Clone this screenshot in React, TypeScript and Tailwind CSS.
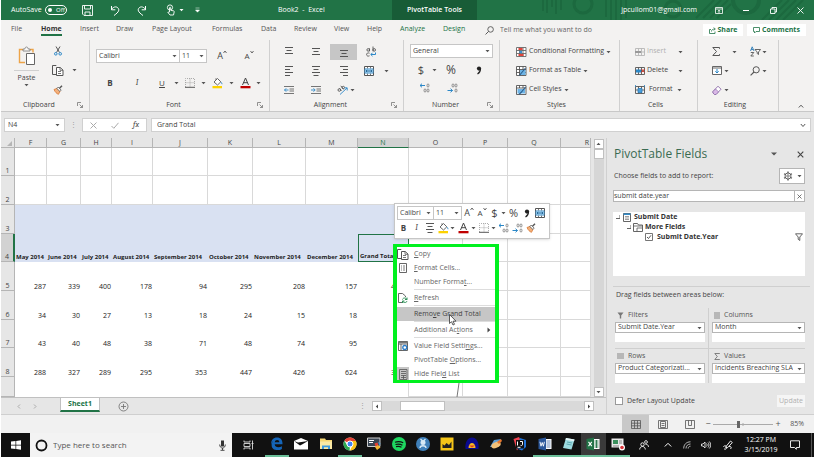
import React from "react";
import type { ReactNode } from "react";

type IconProps = { w?: number; h?: number; children: ReactNode; className?: string };

function Svg({ w = 12, h = 12, children, className = "" }: IconProps) {
  return (
    <svg width={w} height={h} viewBox={`0 0 ${w} ${h}`} fill="none" className={`shrink-0 ${className}`} aria-hidden="true">
      {children}
    </svg>
  );
}

const Caret = ({ className = "text-[#555]" }: { className?: string }) => (
  <Svg w={5} h={4} className={className}>
    <path d="M.5 1h4L2.5 3.2z" fill="currentColor" />
  </Svg>
);

const Launcher = () => (
  <Svg w={6} h={6}>
    <path d="M.5 4V.5H4M2.5 2.5l3 3M5.5 3v2.5H3" stroke="#777" strokeWidth=".8" />
  </Svg>
);

const Scissors = () => (
  <Svg w={10} h={10}>
    <path d="M3 .5l3.5 6M7 .5L3.5 6.5" stroke="#555" strokeWidth="1" />
    <circle cx="2.8" cy="7.8" r="1.3" stroke="#2b88c8" />
    <circle cx="7.2" cy="7.8" r="1.3" stroke="#2b88c8" />
  </Svg>
);

const CopyIcon = () => (
  <Svg w={12} h={11}>
    <path d="M4.5 9.5h-4v-9h3.8" stroke="#555" />
    <path d="M4.5 2.5h3.7l2.8 2.6v5.4H4.5z" fill="#fff" stroke="#555" />
    <path d="M8 2.5v2.8h3M6 6.5h3M6 8.5h3" stroke="#555" strokeWidth=".8" />
  </Svg>
);

const Brush = () => (
  <Svg w={10} h={10}>
    <path d="M1 4.5l3.5-1.3 2.6 2.9L5.5 9.3C3.8 8.8 2 7 1 4.5z" fill="#f3b07c" stroke="#d97a35" strokeWidth=".8" />
    <path d="M3.8 3.5l1.4-1.4 3 3-1.3 1.3z" fill="#fff" stroke="#555" strokeWidth=".8" />
    <path d="M6.5 3.3L9 .8" stroke="#555" strokeWidth="1.5" />
  </Svg>
);

const PasteIcon = () => (
  <Svg w={18} h={20}>
    <path d="M5 3.5H1.5v13H7M12 3.5h3v3" stroke="#eda447" strokeWidth="1.4" />
    <path d="M5 5V3h1.8C7 1.7 7.6 1 8.5 1s1.5.7 1.7 2H12v2z" fill="#f8f8f8" stroke="#777" strokeWidth=".8" />
    <path d="M8.5 7.5h8v11h-8z" fill="#fff" stroke="#666" />
  </Svg>
);

const GrowA = ({ up }: { up: boolean }) => (
  <span className="flex items-start text-[#444]">
    <span className={up ? "text-[9px] leading-3" : "text-[8px] leading-3"}>A</span>
    <Svg w={4} h={4}>
      <path d={up ? "M.5 3L2 1l1.500 2" : "M.5 1L2 3l1.500-2"} stroke="#444" strokeWidth=".8" />
    </Svg>
  </span>
);

const BorderIcon = () => (
  <Svg w={10} h={10}>
    <path d="M.5 9V.5h9V9M5 .5V9M.5 4.700h9" stroke="#999" strokeWidth=".8" strokeDasharray="1 1" />
    <path d="M0 9.300h10" stroke="#555" />
  </Svg>
);

const FillIcon = () => (
  <Svg w={11} h={12}>
    <path d="M2 5l3.500-3.500 3.300 3.300L5.500 8z" fill="#fff" stroke="#555" strokeWidth=".9" />
    <path d="M4 3V1.200" stroke="#555" strokeWidth=".8" />
    <path d="M9 5.200c.8 1 1 1.600 1 2" stroke="#2b88c8" />
    <path d="M.5 9h9.500v2.300H.5z" fill="#fdd200" />
  </Svg>
);

const FontColor = () => (
  <Svg w={11} h={12}>
    <path d="M2.500 8l3-7 3 7M3.500 5.700h4" stroke="#444" />
    <path d="M.5 9h10v2.300H.5z" fill="#c00000" />
  </Svg>
);

function Lines({ d }: { d: string }) {
  return (
    <Svg w={10} h={10}>
      <path d={d} stroke="#555" strokeWidth="1" />
    </Svg>
  );
}
const alignD = {
  top: "M1 .5h8M2.500 3.500h5M1 6.500h8",
  middle: "M1 1.500h8M2.500 4.500h5M1 7.500h8",
  bottom: "M1 3.500h8M2.500 6.500h5M1 9.500h8",
  center: "M1 .5h8M2.500 3.500h5M1 6.500h8M2.500 9.500h5",
  left: "M1 .5h8M1 3.500h5M1 6.500h8M1 9.500h5",
  right: "M1 .5h8M4 3.500h5M1 6.500h8M4 9.500h5",
};

const Indent = ({ right }: { right?: boolean }) => (
  <Svg w={10} h={10}>
    <path d="M0 1.500h10M5.500 4h4.500M5.500 6h4.500M0 8.500h10" stroke="#666" strokeWidth=".9" />
    <path d={right ? "M0 5h4M2.500 3.300L4.200 5 2.500 6.700" : "M.5 5h4M2.200 3.300L.5 5l1.700 1.700"} stroke="#2b88c8" strokeWidth=".9" />
  </Svg>
);

const MergeIcon = () => (
  <Svg w={10} h={10}>
    <path d="M.5.5h9v9h-9z" fill="#fff" stroke="#555" />
    <path d="M3.500.5v2M6.500.5v2M3.500 7.500v2M6.500 7.500v2" stroke="#555" strokeWidth=".8" />
    <path d="M.8 2.800h8.400v4.400H.8z" fill="#9fd0f0" stroke="#2b7cb8" strokeWidth=".6" />
    <path d="M2 5h6M3.200 3.900L2 5l1.200 1.100M6.800 3.900L8 5 6.800 6.100" stroke="#1b5e91" strokeWidth=".8" />
  </Svg>
);

const WrapIcon = () => (
  <Svg w={10} h={11}>
    <path d="M3.500 2.300v3M7 .5v4.800" stroke="#555" strokeWidth=".9" />
    <circle cx="2.200" cy="3.900" r="1.300" stroke="#555" strokeWidth=".9" />
    <circle cx="8.200" cy="3.900" r="1.300" stroke="#555" strokeWidth=".9" />
    <path d="M3.500 7.200C1.500 6.300.6 7.500.6 8.600s1.200 2 2.900 1.200" stroke="#555" strokeWidth=".9" />
    <path d="M9.500 6.500v2H5M6.500 6.800L4.800 8.500l1.700 1.700" stroke="#2b88c8" />
  </Svg>
);

const OrientIcon = () => (
  <Svg w={11} h={10}>
    <circle cx="2.300" cy="5" r="1.300" stroke="#555" strokeWidth=".9" />
    <path d="M2.500 3.200l2 2.500M3.800.8l2.700 3.500" stroke="#555" strokeWidth=".9" />
    <circle cx="6.300" cy="2.500" r="1.200" stroke="#555" strokeWidth=".9" />
    <path d="M3 9.500l7-6.500M7.500 2.800h2.700v2.700" stroke="#2b88c8" strokeWidth=".9" />
  </Svg>
);

const Decimals = ({ more }: { more?: boolean }) => (
  <Svg w={11} h={10}>
    {!more && <ellipse cx="6" cy="2.500" rx="1" ry="1.600" stroke="#777" strokeWidth=".8" />}
    <ellipse cx="9" cy="2.500" rx="1" ry="1.600" stroke="#777" strokeWidth=".8" />
    {more && <ellipse cx="6" cy="7.500" rx="1" ry="1.600" stroke="#777" strokeWidth=".8" />}
    <ellipse cx="9" cy="7.500" rx="1" ry="1.600" stroke="#777" strokeWidth=".8" />
    <path d={more ? "M1 2.500h5M3 .7L1 2.500l2 1.800" : "M.5 7.500h5M3.500 5.700l2 1.800-2 1.800"} stroke="#2b88c8" strokeWidth="1" />
  </Svg>
);

const Comma = () => (
  <Svg w={6} h={9}>
    <circle cx="3" cy="2.600" r="2.100" fill="#222" />
    <path d="M4.500 2.500C4.600 5 3.500 6.800 1.500 8" stroke="#222" strokeWidth="1.200" />
  </Svg>
);

const CondIcon = () => (
  <Svg w={11} h={10}>
    <path d="M.5.5h9.500v9H.5zM.5 3.500h9.500M.5 6.500h9.500M3.500.5v9M7 .5v9" fill="#fff" stroke="#666" strokeWidth=".9" />
    <path d="M2.500 1h4v2h-4zM2.500 7h5v2h-5z" fill="#e2453c" />
    <path d="M3.500 4h2.500v2H3.500z" fill="#3b8fd0" />
  </Svg>
);
const TableIcon = () => (
  <Svg w={11} h={10}>
    <path d="M.5.5h9.500v9H.5zM.5 3.500h9.500M.5 6.500h9.500M3.500.5v9M7 .5v9" fill="#fff" stroke="#555" strokeWidth=".9" />
    <path d="M4 4h5.500v5H4z" fill="#6db4e6" />
    <path d="M9.500 2L5 7.500l-1.500 1.800" stroke="#2b5f8f" strokeWidth="1.100" />
  </Svg>
);
const StyleIcon = () => (
  <Svg w={11} h={10}>
    <path d="M.5.5h9.500v9H.5zM.5 3h9.500M3.500.5v2.500M7 .5v2.500" fill="#fff" stroke="#555" strokeWidth=".9" />
    <path d="M1.500 4h7.500v4.500H1.500z" fill="#6db4e6" />
    <path d="M9.500 2L5 7.500l-2 1.800" stroke="#2b5f8f" strokeWidth="1.100" />
  </Svg>
);
const CellsIcon = ({ kind }: { kind: "insert" | "delete" | "format" }) => {
  const c = kind === "insert" ? "#b5b5b5" : "#555";
  return (
    <Svg w={10} h={10}>
      <path d="M.5 1.500h9M.5 8.500h9M.5 1.500v7M9.500 1.500v7M3.500 1.500v7M6.500 1.500v7M.5 5h9" stroke={c} strokeWidth=".9" />
      {kind === "insert" && <path d="M0 5h6" stroke="#999" strokeWidth="2" />}
      {kind === "delete" && (
        <>
          <path d="M1 3.500h5v3H1z" fill="#2b88c8" />
          <path d="M6.500 3l3 3.500M9.500 3l-3 3.500" stroke="#d83b2c" />
        </>
      )}
      {kind === "format" && <path d="M3 3.500h4v4H3zM.5 0v2M9.500 0v2" fill="#49a0de" stroke="#2b7cb8" strokeWidth=".8" />}
    </Svg>
  );
};

const Sigma = () => (
  <Svg w={8} h={9}>
    <path d="M7.500 1.800V.5H.8L4.500 4.500.8 8.500h6.700V7.200" stroke="#555" />
  </Svg>
);
const SortIcon = () => (
  <Svg w={11} h={11}>
    <path d="M.5 5L2.200.8 4 5M1.200 3.500h2" stroke="#2b7cb8" strokeWidth=".9" />
    <path d="M.8 6.500h3L.8 10h3" stroke="#555" strokeWidth=".9" />
    <path d="M5 3.500h5.500L8.500 6v2.500l-1.300-1V6z" fill="#fff" stroke="#555" strokeWidth=".9" />
  </Svg>
);
const FillDown = () => (
  <Svg w={10} h={9}>
    <path d="M.5.5h9v8h-9zM.5 2h9" fill="#fff" stroke="#555" strokeWidth=".9" />
    <path d="M5 3v4M3.300 5.300L5 7l1.700-1.700" stroke="#2b88c8" />
  </Svg>
);
const FindIcon = ({ size = 10 }: { size?: number }) => (
  <svg width={size} height={size} viewBox="0 0 10 10" fill="none" className="shrink-0" aria-hidden="true">
    <circle cx="6.200" cy="3.800" r="3.100" stroke="#555" />
    <path d="M4 6L.6 9.400" stroke="#555" strokeWidth="1.100" />
  </svg>
);
const EraserIcon = () => (
  <Svg w={10} h={10}>
    <path d="M1 6.500l5-5.300 3 3-5 5.300H2.500L1 8z" fill="#fff" stroke="#8b6aa8" strokeWidth=".9" />
    <path d="M1 6.500l2.500-2.600 3 3L4 9.500H2.500L1 8z" fill="#d9b8e6" stroke="#8b6aa8" strokeWidth=".7" />
  </Svg>
);

const Btn = ({ label, className = "", children }: { label: string; className?: string; children?: ReactNode }) => (
  <button type="button" aria-label={label} className={`flex items-center justify-center ${className}`}>
    {children}
  </button>
);

function Pick({ label, value, className }: { label: string; value: string; className: string }) {
  return (
    <span className={`flex items-center border border-[#c6c6c6] bg-white pr-0.5 ${className}`}>
      <select aria-label={label} className="h-full min-w-0 flex-1 appearance-none bg-transparent pl-0.5 text-[7px] leading-3 text-[#444] outline-none">
        <option>{value}</option>
      </select>
      <Caret />
    </span>
  );
}

function Group({ name, launcher, className, children }: { name: string; launcher?: boolean; className: string; children: ReactNode }) {
  return (
    <section aria-label={name} className={`flex flex-col ${className}`}>
      <div className="flex h-[59px] items-stretch border-r border-[#d0d0d0]">{children}</div>
      <div className="flex h-3 items-center border-r border-[#d0d0d0] pr-1.5">
        <span className="flex-1 text-center">{name}</span>
        {launcher && <Btn label={`${name} settings`}><Launcher /></Btn>}
      </div>
    </section>
  );
}

function TitleBar() {
  return (
    <header className="flex h-5 items-stretch bg-[#217346] text-[7px] text-white">
      <div className="flex w-[391px] items-center">
        <span className="w-[44px] pl-2.5">AutoSave</span>
        <button type="button" role="switch" aria-checked="false" aria-label="AutoSave" className="flex h-2.5 w-[22px] items-center gap-1 rounded-full border border-white pl-0.5 text-[6px]">
          <span className="h-1 w-1 rounded-full bg-white" />Off
        </button>
        <Btn label="Save" className="w-[40px]">
          <Svg w={11} h={11}>
            <path d="M.5.5h10v10H2L.5 9zM2.500.5v3.500h6V.5M3 10.500V7h5v3.500" stroke="#fff" strokeWidth=".9" />
          </Svg>
        </Btn>
        <Btn label="Undo" className="w-[16px]">
          <Svg w={10} h={11}>
            <path d="M1.500 1v3.800h3.800M1.500 4.500C3 2 6 1 7.800 2.800s1.500 4-3.800 7.700" stroke="#fff" strokeWidth="1" />
          </Svg>
        </Btn>
        <Btn label="Redo" className="w-[38px]">
          <Svg w={10} h={11}>
            <path d="M8.500 1v3.800H4.700M8.500 4.500C7 2 4 1 2.200 2.800s-1.500 4 3.800 7.700" stroke="#fff" strokeWidth="1" />
          </Svg>
        </Btn>
        <Btn label="Touch mode" className="w-[28px] gap-1">
          <Svg w={9} h={12}>
            <circle cx="4" cy="3.500" r="2.600" stroke="#fff" strokeWidth=".9" />
            <path d="M3.500 8V3.800c0-.8 1.200-.8 1.200 0v2.500l3 .6c.5.2.6.500.5 1L7.500 11H4L1.800 8.300z" fill="#217346" stroke="#fff" strokeWidth=".9" />
          </Svg>
          <Caret className="text-white" />
        </Btn>
        <Btn label="Customize toolbar" className="w-[16px]">
          <Svg w={5} h={6}><path d="M.5 1h4M.5 3h4L2.500 5.200z" fill="#fff" stroke="#fff" strokeWidth=".5" /></Svg>
        </Btn>
        <span className="flex-1 pl-[73px] whitespace-pre">Book2  -  Excel</span>
      </div>
      <div className="flex w-[85px] items-center justify-center bg-[#185c37] font-semibold">PivotTable Tools</div>
      <div className="relative flex flex-1 items-center justify-end overflow-hidden">
        <svg className="absolute right-0 top-0" width="276" height="20" viewBox="0 0 276 20" fill="none" aria-hidden="true">
          <g stroke="#1c693f" strokeWidth="2">
            <path d="M5 0v11M9 0v13M14 0v7M18 0v14M23 0v10" />
            <circle cx="45" cy="4" r="9" strokeWidth="3" />
            <path d="M68 0v17M73 0v20M78 0v20M83 0v20M88 0v18" />
            <circle cx="135" cy="9" r="8" strokeWidth="3" />
            <path d="M158 18l18-18M165 18l18-18M172 18l18-18M179 18l14-14" />
            <circle cx="208" cy="0" r="13" strokeWidth="4" />
            <path d="M224 20l20-20M231 20l20-20M238 20l20-20M245 20l20-20" />
          </g>
        </svg>
        <span className="relative pr-2">jpcullom01@gmail.com</span>
        <div className="relative flex">
          <Btn label="Ribbon display options" className="w-[27px]">
            <Svg w={8} h={7}><path d="M.5.5h7v6h-7zM.5 2h7M4 6V3.300M2.800 4.300L4 3.200l1.200 1.100" stroke="#fff" strokeWidth=".8" /></Svg>
          </Btn>
          <Btn label="Minimize" className="w-[28px]"><Svg w={7} h={7}><path d="M0 3.500h6" stroke="#fff" /></Svg></Btn>
          <Btn label="Restore" className="w-[27px]">
            <Svg w={7} h={7}><path d="M.5 2h4.500v4.500H.5zM2 2V.5h4.500V5H5" stroke="#fff" strokeWidth=".9" /></Svg>
          </Btn>
          <Btn label="Close" className="w-[27px]"><Svg w={7} h={7}><path d="M.5.5l6 6M6.500.5l-6 6" stroke="#fff" strokeWidth=".9" /></Svg></Btn>
        </div>
      </div>
    </header>
  );
}

const tabs: [string, string][] = [
  ["File", "w-[30px]"], ["Home", "w-[39px]"], ["Insert", "w-[36px]"], ["Draw", "w-[36px]"],
  ["Page Layout", "w-[60px]"], ["Formulas", "w-[49px]"], ["Data", "w-[33px]"], ["Review", "w-[40px]"],
  ["View", "w-[33px]"], ["Help", "w-[33px]"], ["Analyze", "w-[43px]"], ["Design", "w-[42px]"],
];

function TabRow() {
  return (
    <nav className="flex h-5 items-center bg-[#f3f2f1] pl-2.5 text-[7px] text-[#555]">
      {tabs.map(([name, w]) => (
        <button key={name} type="button" className={`flex text-left whitespace-nowrap ${w}`}>
          <span
            className={
              name === "Home"
                ? "border-b-2 border-[#217346] font-bold text-[#333]"
                : name === "Analyze" || name === "Design"
                  ? "border-b-2 border-transparent text-[#217346]"
                  : "border-b-2 border-transparent"
            }
          >
            {name}
          </span>
        </button>
      ))}
      <FindIcon size={9} />
      <input aria-label="Tell me what you want to do" placeholder="Tell me what you want to do" className="ml-1.5 w-[120px] bg-transparent outline-none placeholder:text-[#666]" />
      <div className="ml-auto flex gap-1 pr-2 font-bold text-[#217346]">
        <button type="button" className="flex h-3 w-[40px] items-center justify-center gap-0.5 bg-white">
          <Svg w={7} h={7}><path d="M2 2.500H.5v4h5.500V4.500M2.500 4.500C2.500 2.500 4 2 6 2M4.800.5L6.300 2 4.800 3.500" stroke="#217346" strokeWidth=".8" /></Svg>
          Share
        </button>
        <button type="button" className="flex h-3 w-[59px] items-center justify-center gap-0.5 bg-white">
          <Svg w={7} h={7}><path d="M.5.5h6v4H3L1.500 6V4.500h-1z" stroke="#217346" strokeWidth=".8" /></Svg>
          Comments
        </button>
      </div>
    </nav>
  );
}

const CurrencyBtn = ({ className = "" }: { className?: string }) => (
  <Btn label="Currency" className={className}>
    <span className="text-[11px] leading-3 text-[#444]">$</span>
  </Btn>
);

function Ribbon() {
  return (
    <div className="flex h-[72px] items-stretch border-b border-[#c8c8c8] bg-[#f3f2f1] text-[7px] text-[#444]">
      <Group name="Clipboard" launcher className="w-[89px]">
        <button type="button" className="ml-3 flex w-[27px] flex-col items-center pt-1.5">
          <PasteIcon />
          <span className="mt-1 border-t border-[#d0d0d0] px-1 pt-0.5 leading-[10px]">Paste</span>
          <Caret />
        </button>
        <div className="ml-3 flex flex-col justify-around pt-0.5">
          <Btn label="Cut" className="w-3"><Scissors /></Btn>
          <div className="flex items-center gap-2">
            <Btn label="Copy" className="w-3"><CopyIcon /></Btn>
            <Caret />
          </div>
          <Btn label="Format painter" className="w-3"><Brush /></Btn>
        </div>
      </Group>

      <Group name="Font" launcher className="w-[180px]">
        <div className="flex flex-1 flex-col gap-3.5 pt-[9px] pl-1.5">
          <div className="flex items-center">
            <Pick label="Font" value="Calibri" className="h-3.5 w-[84px]" />
            <Pick label="Font size" value="11" className="h-3.5 w-[27px] border-l-0" />
            <Btn label="Increase font size" className="ml-2.5 w-2.5"><GrowA up /></Btn>
            <Btn label="Decrease font size" className="ml-4 w-3"><GrowA up={false} /></Btn>
          </div>
          <div className="flex h-3 items-center">
            <Btn label="Bold" className="w-[28px] font-bold text-[8px]">B</Btn>
            <Btn label="Italic" className="w-[26px] font-serif text-[8px] italic">I</Btn>
            <Btn label="Underline" className="w-[24px] text-[8px] underline">U</Btn>
            <Caret />
            <Btn label="Borders" className="w-[22px]"><BorderIcon /></Btn>
            <Caret />
            <Btn label="Fill colour" className="w-[23px]"><FillIcon /></Btn>
            <Caret />
            <Btn label="Font colour" className="w-[22px]"><FontColor /></Btn>
            <Caret />
          </div>
        </div>
      </Group>

      <Group name="Alignment" launcher className="w-[134px]">
        <div className="grid flex-1 grid-cols-[26px_27px_29px_26px_1fr] grid-rows-3 items-center justify-items-center pt-0.5 pl-1.5">
          <Btn label="Top align"><Lines d={alignD.top} /></Btn>
          <Btn label="Middle align"><Lines d={alignD.middle} /></Btn>
          <Btn label="Bottom align" className="h-4 w-[27px] bg-[#c6c6c6]"><Lines d={alignD.bottom} /></Btn>
          <Btn label="Wrap text"><WrapIcon /></Btn>
          <span />
          <Btn label="Align left"><Lines d={alignD.left} /></Btn>
          <Btn label="Center"><Lines d={alignD.center} /></Btn>
          <Btn label="Align right"><Lines d={alignD.right} /></Btn>
          <Btn label="Merge and center" className="pr-1"><MergeIcon /></Btn>
          <Btn label="Merge options" className="justify-self-start"><Caret /></Btn>
          <Btn label="Decrease indent"><Indent /></Btn>
          <Btn label="Increase indent"><Indent right /></Btn>
          <Btn label="Orientation" className="gap-0.5 pl-1"><OrientIcon /><Caret /></Btn>
        </div>
      </Group>

      <Group name="Number" launcher className="w-[96px]">
        <div className="flex flex-1 flex-col gap-1.5 pt-1 pl-1.5">
          <Pick label="Number format" value="General" className="h-3.5 w-[83px]" />
          <div className="flex h-3 items-center">
            <CurrencyBtn className="w-[22px]" />
            <Caret />
            <Btn label="Percent" className="w-[28px] text-[12px] leading-3">%</Btn>
            <Btn label="Comma style" className="w-[28px]"><Comma /></Btn>
          </div>
          <div className="flex h-3 items-center">
            <Btn label="Increase decimal" className="w-[28px]"><Decimals more /></Btn>
            <Btn label="Decrease decimal" className="w-[28px]"><Decimals /></Btn>
          </div>
        </div>
      </Group>

      <Group name="Styles" className="w-[120px]">
        <div className="flex flex-1 flex-col justify-around pt-0.5 pl-4">
          <button type="button" className="flex items-center gap-0.5 whitespace-nowrap"><CondIcon />Conditional Formatting<Caret /></button>
          <button type="button" className="flex items-center gap-0.5 whitespace-nowrap"><TableIcon />Format as Table<Caret /></button>
          <button type="button" className="flex items-center gap-0.5 whitespace-nowrap"><StyleIcon />Cell Styles<Caret /></button>
        </div>
      </Group>

      <Group name="Cells" className="w-[78px]">
        <div className="flex flex-1 flex-col justify-around pt-0.5 pl-[15px]">
          <button type="button" className="flex items-center gap-0.5 text-[#b0b0b0]"><CellsIcon kind="insert" /><span className="w-[29px] text-left">Insert</span><Caret /></button>
          <button type="button" className="flex items-center gap-0.5"><CellsIcon kind="delete" /><span className="w-[29px] text-left">Delete</span><Caret /></button>
          <button type="button" className="flex items-center gap-1"><CellsIcon kind="format" />Format<Caret /></button>
        </div>
      </Group>

      <Group name="Editing" className="w-[81px]">
        <div className="grid flex-1 grid-cols-[38px_1fr] items-center justify-items-start pt-0.5 pl-3.5">
          <Btn label="AutoSum" className="gap-3"><Sigma /><Caret /></Btn>
          <Btn label="Sort and filter" className="gap-px"><SortIcon /><Caret /></Btn>
          <Btn label="Fill" className="gap-0.5"><FillDown /><Caret /></Btn>
          <Btn label="Find" className="gap-0.5"><FindIcon /><Caret /></Btn>
          <Btn label="Clear" className="gap-0.5"><EraserIcon /><Caret /></Btn>
        </div>
      </Group>
      <div className="flex flex-1 items-end justify-end pr-2.5 pb-0.5">
        <Btn label="Collapse ribbon"><Svg w={6} h={6}><path d="M.8 4.500L3 2.200l2.200 2.300" stroke="#555" /></Svg></Btn>
      </div>
    </div>
  );
}

function FormulaBar() {
  return (
    <div className="flex h-[26px] items-center gap-1 bg-[#e6e6e6] px-[3px] text-[7px] text-[#444]">
      <span className="flex h-3.5 w-[61px] items-center border border-[#d0d0d0] bg-white pr-1">
        <input aria-label="Name box" defaultValue="N4" className="min-w-0 flex-1 bg-transparent pl-[3px] outline-none" />
        <Caret />
      </span>
      <span className="w-2 text-center text-[#999]">⋮</span>
      <div className="ml-px flex h-3.5 w-[65px] items-center justify-around border border-[#d0d0d0] bg-white">
        <Btn label="Cancel"><Svg w={7} h={7}><path d="M.5.5l6 6M6.500.5l-6 6" stroke="#aaa" /></Svg></Btn>
        <Btn label="Enter"><Svg w={8} h={7}><path d="M.5 4l2.300 2.300L7.500.8" stroke="#aaa" /></Svg></Btn>
        <Btn label="Insert function" className="font-serif text-[8px] italic">fx</Btn>
      </div>
      <span className="flex h-3.5 flex-1 items-center border border-[#d0d0d0] bg-white pr-1">
        <input aria-label="Formula" defaultValue="Grand Total" className="min-w-0 flex-1 bg-transparent pl-[5px] outline-none" />
        <Svg w={6} h={5}><path d="M.8 1L3 3.500 5.200 1" stroke="#555" /></Svg>
      </span>
    </div>
  );
}

const columns: [string, string][] = [
  ["F", "w-[32px]"], ["G", "w-[34px]"], ["H", "w-[31px]"], ["I", "w-[41px]"], ["J", "w-[55px]"], ["K", "w-[45px]"],
  ["L", "w-[53px]"], ["M", "w-[52px]"], ["N", "w-[51px]"], ["O", "w-[54px]"], ["P", "w-[45px]"], ["Q", "w-[53px]"], ["R", ""],
];
const months = ["May 2014", "June 2014", "July 2014", "August 2014", "September 2014", "October 2014", "November 2014", "December 2014", "Grand Total"];
const values = [
  [287, 339, 400, 178, 94, 295, 208, 157, 4131],
  [34, 30, 27, 13, 18, 24, 15, 18, 320],
  [43, 40, 48, 38, 71, 48, 74, 95, 655],
  [288, 327, 289, 295, 353, 447, 426, 624, 3874],
];

const rowHeights = ["h-[28px]", "h-[29px]", "h-[29px]", "h-[28px]", "h-[29px]", "h-[29px]", "h-[28px]", "h-[29px]", "h-[20px]"];

function Sheet() {
  return (
    <div className="flex min-w-0 flex-1 items-stretch">
      <div className="min-w-0 flex-1 overflow-hidden">
        <table className="w-full table-fixed border-separate border-spacing-0 bg-white text-[7px] leading-[9px] text-[#222]">
          <thead>
            <tr className="h-2.5 bg-[#e6e6e6] text-[#444]">
              <th className="w-[14px] border-r border-b border-[#b5b5b5] p-0">
                <Svg w={12} h={8}><path d="M11 2v5H6z" fill="#b5b5b5" /></Svg>
              </th>
              {columns.map(([c, w]) => (
                <th
                  key={c}
                  scope="col"
                  className={`${w} border-r p-0 font-normal ${c === "R" ? "pr-px text-right" : ""} ${c === "N" ? "border-b border-r-[#b5b5b5] border-b-[#217346] bg-[#d2d2d2] text-[#217346]" : "border-b border-[#b5b5b5]"}`}
                >
                  {c}
                </th>
              ))}
            </tr>
          </thead>
          <tbody>
            {rowHeights.map((h, r) => (
              <tr key={r} className={h}>
                <th
                  scope="row"
                  className={`border-b border-b-[#b5b5b5] p-0 align-bottom font-normal text-[#444] ${r === 3 ? "border-r-2 border-r-[#217346] bg-[#d2d2d2]" : "border-r border-r-[#b5b5b5] bg-[#e6e6e6]"}`}
                >
                  {r < 8 ? r + 1 : ""}
                </th>
                {columns.map(([c], i) => {
                  const pivot = i < 9;
                  let look = "border-r border-b border-[#d9d9d9]";
                  if (pivot && (r === 2 || r === 3)) look = "bg-[#d9e1f2]";
                  if (pivot && r > 3) look = i === 8 ? "border-r border-[#d9d9d9]" : "";
                  if (i === 8 && r === 3) look = "border border-[#217346] bg-[#d9e1f2]";
                  if (r === 3 && pivot) {
                    return (
                      <td key={c} className={`${look} p-0 align-bottom text-[6px] font-bold whitespace-nowrap`}>
                        <span className="pl-px">{months[i]}</span>
                      </td>
                    );
                  }
                  return (
                    <td key={c} className={`${look} p-0 pr-px text-right align-bottom`}>
                      {pivot && r > 3 && r < 8 ? values[r - 4][i] : ""}
                    </td>
                  );
                })}
              </tr>
            ))}
          </tbody>
        </table>
      </div>
      <div className="mx-px flex w-[13px] flex-col items-center bg-[#e6e6e6] pt-px">
        <Btn label="Scroll up" className="h-2.5 w-2.5 border border-[#c0c0c0] bg-white"><Svg w={5} h={4}><path d="M.5 3h4L2.500.8z" fill="#555" /></Svg></Btn>
        <div className="flex w-2.5 flex-1 bg-[#d6d6d6]"><div className="h-2.5 w-full border border-[#c0c0c0] bg-white" /></div>
        <Btn label="Scroll down" className="h-2.5 w-2.5 border border-[#c0c0c0] bg-white"><Caret /></Btn>
      </div>
    </div>
  );
}

function SheetTabs() {
  return (
    <div className="flex h-[17px] items-start border-t border-[#c0c0c0] bg-[#e6e6e6] text-[7px]">
      <Btn label="Previous sheet" className="h-4 w-[28px] pl-2"><Svg w={4} h={5}><path d="M3 .5l-2 2 2 2" stroke="#aaa" /></Svg></Btn>
      <Btn label="Next sheet" className="h-4 w-3"><Svg w={4} h={5}><path d="M1 .5l2 2-2 2" stroke="#aaa" /></Svg></Btn>
      <button type="button" className="ml-[19px] h-3.5 w-[40px] border-x border-b-2 border-x-[#c0c0c0] border-b-[#217346] bg-white font-bold text-[#217346]">Sheet1</button>
      <Btn label="New sheet" className="ml-[18px] h-4">
        <Svg w={11} h={11}><circle cx="5.500" cy="5.500" r="4.500" stroke="#777" strokeWidth=".9" /><path d="M5.500 3v5M3 5.500h5" stroke="#777" strokeWidth=".9" /></Svg>
      </Btn>
      <div className="ml-auto flex h-4 items-center pr-3">
        <span className="mr-1.5 text-[#999]">⋮</span>
        <Btn label="Scroll left" className="h-2.5 w-2.5 border border-[#c0c0c0] bg-white"><Svg w={4} h={5}><path d="M3 .5v4l-2.200-2z" fill="#444" /></Svg></Btn>
        <div className="flex h-2.5 w-[202px] bg-[#d9d9d9] pl-[18px]"><div className="h-2.5 w-[45px] border border-[#c0c0c0] bg-white" /></div>
        <Btn label="Scroll right" className="h-2.5 w-2.5 border border-[#c0c0c0] bg-white"><Svg w={4} h={5}><path d="M1 .5v4l2.200-2z" fill="#444" /></Svg></Btn>
      </div>
    </div>
  );
}

function Area({ title, field, icon, className }: { title: string; field: string; icon: ReactNode; className: string }) {
  return (
    <div className={`flex min-w-0 flex-col border-[#cfcfcf] ${className}`}>
      <div className="flex h-3.5 items-center gap-1 pl-0.5 text-[#555]">{icon}<span>{title}</span></div>
      <div className="h-5 bg-white">
        <button type="button" className="flex h-[11px] w-full items-center justify-between border border-[#b5b5b5] bg-white pr-0.5 pl-0.5 text-[#444]">
          <span className="overflow-hidden whitespace-nowrap">{field}</span>
          <Caret />
        </button>
      </div>
    </div>
  );
}

function FieldsPane() {
  return (
    <aside className="flex w-[208px] shrink-0 flex-col border-l border-[#d0d0d0] bg-[#e6e6e6] pl-1.5 text-[7px] text-[#444]">
      <div className="flex h-8 items-center pr-2.5">
        <h2 className="flex-1 pl-px text-[12px] text-[#3b6b52]">PivotTable Fields</h2>
        <Btn label="Pane options" className="w-[18px] pr-1"><Svg w={6} h={4}><path d="M0 .5h6L3 3.500z" fill="#555" /></Svg></Btn>
        <Btn label="Close pane" className="ml-3"><Svg w={7} h={7}><path d="M.7.7l5.600 5.600M6.300.7L.7 6.300" stroke="#444" strokeWidth="1.100" /></Svg></Btn>
      </div>
      <div className="flex h-3 items-center justify-between pr-[9px] pl-px">
        <span>Choose fields to add to report:</span>
        <Btn label="Tools" className="h-4 w-[26px] gap-1 border border-[#b5b5b5] bg-white">
          <Svg w={10} h={10}>
            <circle cx="5" cy="5" r="3" stroke="#555" strokeWidth=".9" /><circle cx="5" cy="5" r="1.200" stroke="#555" strokeWidth=".8" />
            <path d="M5 .5v1.500M5 8v1.500M1.100 2.700l1.300.8M7.600 6.500l1.300.8M1.100 7.300l1.300-.8M7.600 3.500l1.300-.8" stroke="#555" strokeWidth="1.300" />
          </Svg>
          <Caret />
        </Btn>
      </div>
      <div className="mt-2 mr-[9px] flex h-3 items-stretch border border-[#b5b5b5] bg-white">
        <input aria-label="Search fields" defaultValue="submit date.year" className="min-w-0 flex-1 bg-transparent outline-none" />
        <Btn label="Clear search" className="w-2.5 border-l border-[#b5b5b5]"><Svg w={5} h={5}><path d="M.5.5l4 4M4.500.5l-4 4" stroke="#555" strokeWidth=".8" /></Svg></Btn>
      </div>
      <div className="mt-2.5 mr-[9px] h-[64px] bg-white leading-[10px] font-bold text-[#333]">
        <div className="flex h-2.5 items-center gap-[3px] pl-[3px]">
          <Svg w={4} h={4}><path d="M4 0v3.500H0" stroke="#666" /></Svg>
          <Svg w={8} h={9}><path d="M.5.5h7v8h-7z" fill="#fff" stroke="#555" strokeWidth=".9" /><path d="M.5 1.200h7" stroke="#2b88c8" strokeWidth="1.500" /><path d="M2 3.500h4M2 5h4M2 6.500h4" stroke="#777" strokeWidth=".7" /></Svg>
          Submit Date
        </div>
        <div className="flex h-2.5 items-center gap-0.5 pl-3.5">
          <Svg w={4} h={4}><path d="M4 0v3.500H0" stroke="#666" /></Svg>
          <Svg w={10} h={9}><path d="M.5 8.500v-8h4l1 1.500h4v6.500z" fill="#fff" stroke="#555" strokeWidth=".9" /><path d="M4 8.500V5h5.500M.5 3h9" stroke="#555" strokeWidth=".8" /></Svg>
          More Fields
        </div>
        <div className="flex h-2.5 items-center pr-0.5 pl-8">
          <label className="flex flex-1 items-center gap-1">
            <input type="checkbox" defaultChecked className="peer sr-only" />
            <Svg w={8} h={8}><path d="M.5.5h7v7h-7z" fill="#fff" stroke="#666" strokeWidth=".9" /><path d="M2 4l1.500 1.500L6 2.300" stroke="#444" strokeWidth=".9" /></Svg>
            Submit Date.Year
          </label>
          <Btn label="Filter"><Svg w={8} h={8}><path d="M.5.8h7L4.800 4v3.500L3.200 6.300V4z" stroke="#555" strokeWidth=".9" /></Svg></Btn>
        </div>
      </div>
      <div className="mt-2.5 mr-1 border-t border-[#cfcfcf] pt-0.5 pl-[3px] leading-3">Drag fields between areas below:</div>
      <div className="mt-[7px] mr-[9px] ml-0.5 grid grid-cols-[94px_1fr]">
        <Area className="border-r border-b pr-[3px] pb-1.5" title="Filters" field="Submit Date.Year" icon={<Svg w={7} h={7}><path d="M.5.5h6L4.200 3.500v3H2.800v-3z" fill="#777" /></Svg>} />
        <Area className="border-b pb-1.5 pl-[3px]" title="Columns" field="Month" icon={<Svg w={6} h={7}><path d="M1 0v7M3 0v7M5 0v7" stroke="#888" /></Svg>} />
        <Area className="border-r pr-[3px]" title="Rows" field="Product Categorizati..." icon={<Svg w={7} h={6}><path d="M0 1h7M0 3h7M0 5h7" stroke="#888" /></Svg>} />
        <Area className="pl-[3px]" title="Values" field="Incidents Breaching SLA" icon={<Svg w={6} h={7}><path d="M5.500 1V.5H.8L3.300 3.500.8 6.500h4.700V6" stroke="#666" strokeWidth=".8" /></Svg>} />
      </div>
      <div className="mt-2.5 mr-[9px] ml-0.5 flex h-4 items-center justify-between">
        <label className="flex items-center gap-1">
          <input type="checkbox" className="h-2 w-2 appearance-none border border-[#999] bg-white" />
          Defer Layout Update
        </label>
        <button type="button" disabled className="h-3 w-[28px] bg-[#f5f5f5] text-[#b0b0b0]">Update</button>
      </div>
    </aside>
  );
}

function StatusBar() {
  return (
    <footer className="flex h-[19px] items-center justify-end border-t border-[#cfcfcf] bg-[#f1f1f1] text-[7px] text-[#555]">
      <Btn label="Normal view" className="h-full w-[27px] bg-[#c8c8c8]"><Svg w={10} h={9}><path d="M.5.5h9v8h-9zM.5 3.200h9M.5 5.800h9M3.500.5v8M6.500.5v8" stroke="#555" strokeWidth=".8" /></Svg></Btn>
      <Btn label="Page layout view" className="w-[27px]"><Svg w={10} h={9}><path d="M.5.5h9v8h-9zM2.500 1.500h5v6h-5zM3.500 3.500h3M3.500 5.500h3" stroke="#555" strokeWidth=".8" /></Svg></Btn>
      <Btn label="Page break view" className="w-[27px]"><Svg w={10} h={9}><path d="M.5.5h9v8h-9zM3.500.5v5h3v-5" stroke="#555" strokeWidth=".8" /></Svg></Btn>
      <Btn label="Zoom out" className="w-[10px] text-[9px]">−</Btn>
      <span className="flex w-[60px] items-center">
        <Svg w={60} h={9}><path d="M0 4.500h60" stroke="#aaa" /><path d="M24 1h3v7h-3z" fill="#666" /><path d="M30 3v3" stroke="#aaa" /></Svg>
      </span>
      <Btn label="Zoom in" className="w-[10px] text-[9px]">+</Btn>
      <span className="w-[31px] pr-2.5 text-right">85%</span>
    </footer>
  );
}

const taskIcons: { name: string; open?: boolean; active?: boolean; art: ReactNode }[] = [
  { name: "Edge", open: true, art: <path d="M2 8.500C2 4 4.500 1.500 8 1.500c3.500 0 5.800 2.600 5.500 6.700H5.700c.2 2.200 1.800 3 3.500 3 1.500 0 2.700-.4 3.700-1v2.700c-1.200.8-2.600 1.200-4.300 1.200-3.800 0-6-2-6-5.200 0-2 .9-3.700 2.700-4.600C3.500 5.200 2.500 6.700 2 8.500zM5.800 6.300h4.500c0-1.500-.8-2.300-2.200-2.300-1.300 0-2.100.9-2.300 2.300z" fill="#1565b8" /> },
  { name: "Mail", art: <><path d="M1 5l7-3 7 3v8.500H1z" fill="#fff" /><path d="M1 5l6 4.500 2-1L15 5 5 6.500z" fill="#111" /></> },
  { name: "File Explorer", art: <><path d="M2 2.500h5l1 1.500h6v9H2z" fill="#f7d774" /><path d="M2 5.500h12V13H2z" fill="#fbe9a5" /><path d="M4 13V9.500h8V13h-2v-1.800H6V13z" fill="#3f9be0" /></> },
  { name: "Chrome", open: true, art: <><circle cx="8" cy="8" r="6.500" fill="#fff" /><path d="M8 8L2.400 4.700A6.500 6.500 0 0 1 13.800 5H8z" fill="#e34133" /><path d="M8 5h5.800A6.500 6.500 0 0 1 8 14.500L10.800 9z" fill="#fbc116" /><path d="M2.400 4.700L5.300 9.500 8 11l-.5 3.500A6.500 6.500 0 0 1 2.400 4.700z" fill="#2da94f" /><circle cx="8" cy="8" r="3" fill="#4285f4" stroke="#fff" /></> },
  { name: "Remote tools", art: <><path d="M1.500 2h12.500v8.500H1.500z" fill="#3a4654" stroke="#ccc" /><path d="M3 4.500h5M3 6.500h4" stroke="#fff" /><path d="M8.500 7.500l3-1 1 3-3 1z" fill="#e34133" /><path d="M9 11l3-2 2.500 2.500L11 14z" fill="#f0b52f" /><path d="M12 6l2.500 1.500-1 2z" fill="#3f9be0" /></> },
  { name: "Spotify", art: <><circle cx="8" cy="8" r="7" fill="#1ed760" /><path d="M4 6.200c3-1 6-.6 8.200.6M4.500 8.500c2.500-.7 5-.4 6.900.7M5 10.700c2-.5 4-.3 5.500.5" stroke="#111" strokeWidth="1.200" /></> },
  { name: "Helper", art: <><circle cx="8" cy="8" r="7" fill="#3f7fb9" /><circle cx="8" cy="6.500" r="2.500" fill="#d7e9f6" /><path d="M5.500 3l2 2M10.500 3l-2 2M5 12c0-3 6-3 6 0" stroke="#d7e9f6" strokeWidth="1.300" /></> },
  { name: "Charts", art: <><path d="M1.500 1.500h13v13h-13z" fill="#f5c518" /><path d="M3.500 12V8l2 1.500L7.500 7l2.500 2 2.500-3.500V12z" fill="#222" /></> },
  { name: "Browser", art: <><path d="M1.500 13C.5 6 4 1.500 8 1.500S15.500 6 14.500 13z" fill="#0a0a8c" /><path d="M4.500 12a3.500 5 0 0 1 7 0z" fill="#f5b921" /><path d="M5 9.500h6l-3 2z" fill="#d83b2c" /></> },
  { name: "Paint", art: <><path d="M2 11L6 4l7-1-3 8z" fill="#5a9bd5" /><ellipse cx="8" cy="9" rx="5" ry="2.800" fill="#f2c179" transform="rotate(-25 8 9)" /><path d="M9 6l4-3 1 2-3 3z" fill="#e8762d" /></> },
  { name: "IDE", art: <><path d="M1.500 3L7 1l3 6-5 7.500z" fill="#f0424f" /><path d="M8 2l6 2v7l-4 3.500-5-2z" fill="#2173d8" /><path d="M4 4h8v8.500H4z" fill="#111" /><path d="M5.500 5.500v4M8 5.500h2.500v3c0 1-1 1.200-2 .8M5.500 11.300h3" stroke="#fff" /></> },
  { name: "Word", open: true, art: <><path d="M8 3h6.500v10H8z" fill="#fff" /><path d="M9.500 5h4M9.500 7h4M9.500 9h4M9.500 11h4" stroke="#2b579a" strokeWidth=".7" /><path d="M1.500 3L9 1.500v13L1.500 13z" fill="#2b579a" /><path d="M3 5.800l1 4.400 1.200-3.700 1.200 3.700 1-4.400" stroke="#fff" strokeWidth=".9" /></> },
  { name: "Notes", open: true, art: <><path d="M5 2l8.500 1.500-3 10L2 12z" fill="#9edbe0" /><path d="M5 2l8.500 1.500-.5 1.700-8.500-1.500z" fill="#e8f6f7" /><path d="M6 6l5 1M5.500 8l5 1" stroke="#4a9aa5" strokeWidth=".8" /></> },
  { name: "Excel", open: true, active: true, art: <><path d="M8 3h6.500v10H8z" fill="#fff" /><path d="M9.500 5h4M9.500 7h4M9.500 9h4M9.500 11h4M11.500 4v8" stroke="#217346" strokeWidth=".9" /><path d="M1.500 3L9 1.500v13L1.500 13z" fill="#217346" /><path d="M3.500 5.800l3.300 4.400M6.800 5.800l-3.300 4.400" stroke="#fff" strokeWidth="1.100" /></> },
  { name: "Recorder", open: true, art: <><path d="M1.500 2.500h12v9h-12z" fill="#e8e8e8" /><path d="M3 4h5v4H3z" fill="#3a8f5c" /><path d="M9 5h3M9 7h3M3 10h6" stroke="#888" /><circle cx="12" cy="11.500" r="3" fill="#fff" /><circle cx="12" cy="11.500" r="1.800" fill="#d8343a" /></> },
];

function Taskbar() {
  return (
    <div className="flex h-6 items-stretch bg-[#111] text-[8px] text-white">
      <Btn label="Start" className="w-[29px]"><Svg w={10} h={10}><path d="M0 1.500L4.500 1v3.700H0zM5.200.9L10 .2v4.500H5.200zM0 5.400h4.500V9L0 8.500zM5.200 5.400H10v4.400l-4.800-.7z" fill="#fff" /></Svg></Btn>
      <label className="flex w-[202px] items-center bg-[#f3f3f3] pr-1.5 pl-[5px] text-[#444]">
        <Svg w={13} h={13}><circle cx="6.500" cy="6.500" r="5" stroke="#111" strokeWidth="1.800" /></Svg>
        <input aria-label="Type here to search" placeholder="Type here to search" className="ml-[5px] min-w-0 flex-1 bg-transparent outline-none placeholder:text-[#555]" />
        <Svg w={7} h={11}><path d="M2 .5h3v6H2z" fill="#333" /><path d="M.7 4.500c0 4.700 5.600 4.700 5.600 0M3.500 8v2M1.500 10.300h4" stroke="#333" strokeWidth=".9" /></Svg>
      </label>
      <Btn label="Task view" className="w-[33px]"><Svg w={11} h={10}><path d="M1 .5v1.500h6V.5M1 9.500V8h6v1.500M1 3.500h6v3H1zM9.500.5v9M8.500 3.500h2" stroke="#ddd" strokeWidth=".9" /></Svg></Btn>
      <div className="grid w-[365px] grid-cols-15">
        {taskIcons.map((t) => (
          <Btn key={t.name} label={t.name} className={`border-b-2 ${t.open ? "border-[#6cc09a]" : "border-transparent"} ${t.active ? "bg-[#3a3a3a]" : ""}`}>
            <Svg w={16} h={16}>{t.art}</Svg>
          </Btn>
        ))}
      </div>
      <div className="ml-auto flex items-stretch">
        <Btn label="People" className="w-[26px]"><Svg w={10} h={10}><circle cx="3.500" cy="4.500" r="1.700" stroke="#fff" strokeWidth=".9" /><path d="M.7 9.500c0-4 5.600-4 5.600 0" stroke="#fff" strokeWidth=".9" /><circle cx="7" cy="2" r="1.400" stroke="#fff" strokeWidth=".8" /><path d="M6.500 4.500c2-.5 3 .8 3 2.500" stroke="#fff" strokeWidth=".8" /></Svg></Btn>
        <Btn label="Hidden icons" className="w-[22px]"><Svg w={8} h={6}><path d="M.8 4.500L4 1.300l3.200 3.200" stroke="#fff" /></Svg></Btn>
        <Btn label="Network" className="w-[15px]"><Svg w={8} h={8}><path d="M.7 7.500C.7 3.500 3.500.8 7.500.8M3 7.500C3 4.800 5 3 7.500 3M5.200 7.500c0-1.500 1-2.300 2.300-2.300" stroke="#ccc" strokeWidth=".9" /></Svg></Btn>
        <Btn label="Volume" className="w-[24px]"><Svg w={10} h={8}><path d="M.5 3h1.500l2-2v6l-2-2H.5zM5.500 2.500c.8.8.8 2.200 0 3M7 1.500c1.300 1.400 1.300 3.600 0 5M8.300.5c2 2 2 5 0 7" stroke="#fff" strokeWidth=".8" /></Svg></Btn>
        <Btn label="Ink" className="w-[20px]"><Svg w={10} h={10}><path d="M3 6.500L7.500 1l1.800 1.500-4.500 5-2 .5zM.5 7c.5-2 3-1.500 3 .5S2 9.500 1 8.800M6 6.500c2-.5 3 1 1.500 2.500" stroke="#fff" strokeWidth=".9" /></Svg></Btn>
        <div className="flex w-[46px] flex-col justify-center text-center text-[7px] leading-[10px]"><span>12:27 PM</span><span>3/15/2019</span></div>
        <Btn label="Notifications" className="w-[21px]"><Svg w={10} h={10}><path d="M.5.8h9v6.700H6.300v1.800L4.500 7.500h-4z" stroke="#fff" strokeWidth=".9" /></Svg></Btn>
        <span className="ml-1.5 w-[3px] border-l border-[#555]" />
      </div>
    </div>
  );
}

function MiniToolbar() {
  return (
    <div className="absolute top-[203px] left-[394px] flex w-[156px] flex-col gap-0.5 border border-[#c6c6c6] bg-white px-0.5 pt-0.5 pb-1 text-[#444] shadow-sm">
      <div className="flex h-3.5 items-center">
        <Pick label="Toolbar font" value="Calibri" className="h-3.5 w-[37px]" />
        <Pick label="Toolbar font size" value="11" className="h-3.5 w-[28px] border-l-0" />
        <Btn label="Grow font" className="w-[14px]"><GrowA up /></Btn>
        <Btn label="Shrink font" className="w-[12px]"><GrowA up={false} /></Btn>
        <CurrencyBtn className="w-[13px]" />
        <Caret />
        <Btn label="Percent style" className="w-[15px] text-[11px] leading-3">%</Btn>
        <Btn label="Comma" className="w-[12px]"><Comma /></Btn>
        <Btn label="Merge" className="w-[14px]"><MergeIcon /></Btn>
      </div>
      <div className="flex h-3 items-center">
        <Btn label="Bold text" className="w-[13px] text-[8px] font-bold">B</Btn>
        <Btn label="Italic text" className="w-[13px] font-serif text-[8px] italic">I</Btn>
        <Btn label="Center text" className="w-[13px]"><Lines d={alignD.center} /></Btn>
        <Btn label="Fill" className="w-[14px]"><FillIcon /></Btn>
        <Caret />
        <Btn label="Text colour" className="w-[16px]"><FontColor /></Btn>
        <Caret />
        <Btn label="Border" className="w-[15px]"><BorderIcon /></Btn>
        <Caret />
        <Btn label="More decimals" className="w-[15px]"><Decimals more /></Btn>
        <Btn label="Fewer decimals" className="w-[13px]"><Decimals /></Btn>
        <Btn label="Painter" className="w-[14px]"><Brush /></Btn>
      </div>
    </div>
  );
}

function MenuItem({ icon, before, k, after, active, arrow, pressed }: { icon?: ReactNode; before?: string; k: string; after: string; active?: boolean; arrow?: boolean; pressed?: boolean }) {
  return (
    <button type="button" role="menuitem" className={`flex h-3.5 w-full items-center text-left whitespace-nowrap ${active ? "bg-[#c6c6c6] text-[#444]" : "text-[#666]"}`}>
      <span className={`flex h-3.5 w-3 shrink-0 items-center justify-center ${pressed ? "bg-[#c6c6c6]" : ""}`}>{icon}</span>
      <span className="ml-[5px] flex-1">{before}<u>{k}</u>{after}</span>
      {arrow && <Svg w={4} h={6} className="mr-1"><path d="M.5.5v5L3.300 3z" fill="#444" /></Svg>}
    </button>
  );
}

const Divider = () => <hr className="mb-px ml-[17px] border-t border-[#ddd]" />;

function ContextMenu() {
  return (
    <div role="menu" className="absolute top-[244px] left-[393px] h-[139px] w-[106px] overflow-hidden border-x-4 border-y-[3px] border-[#00f01e] bg-white text-[7px]">
      <MenuItem icon={<CopyIcon />} k="C" after="opy" />
      <MenuItem icon={<Svg w={8} h={10}><path d="M.5.5h7v9h-7z" stroke="#555" strokeWidth=".9" /><path d="M2 3h1M4 3h2M2 5h1M4 5h2M2 7h1M4 7h2" stroke="#555" strokeWidth=".8" /></Svg>} k="F" after="ormat Cells..." />
      <MenuItem before="Number Forma" k="t" after="..." />
      <Divider />
      <MenuItem icon={<Svg w={10} h={11}><path d="M4 9.500H.5v-9h4L7.500 3v1" stroke="#555" strokeWidth=".9" /><path d="M4.500 6.500c.5-2 3.500-2 4.500 0M9 4.500v2H7M9 8c-.5 2-3.500 2-4.500 0M4.500 10V8h2" stroke="#2f8f57" /></Svg>} k="R" after="efresh" />
      <Divider />
      <MenuItem before="Remo" k="v" after="e Grand Total" active />
      <Divider />
      <MenuItem before="Additional Ac" k="t" after="ions" arrow />
      <Divider />
      <MenuItem icon={<Svg w={10} h={10}><path d="M.5.5h9v9h-9zM.5 3h9M3 3v6.500" stroke="#555" strokeWidth=".9" /><path d="M.5 1.500h9" stroke="#777" strokeWidth="1.500" /><circle cx="6.800" cy="6.500" r="2" fill="#fff" stroke="#2b7cc8" strokeWidth="1.300" /></Svg>} before="Value Field Setti" k="n" after="gs..." />
      <MenuItem before="PivotTable " k="O" after="ptions..." />
      <MenuItem icon={<Svg w={9} h={11}><path d="M.5.5h7.500v10H.5zM2 2.500h5M2 4.500h5M2 6.500h5M4.500 6.500V10M2 8.500h5" stroke="#555" strokeWidth=".8" /></Svg>} before="Hide Fiel" k="d" after=" List" pressed />
    </div>
  );
}

export default function App() {
  return (
    <div className="relative overflow-hidden bg-white pr-0.5 pl-px font-['Open_Sans',sans-serif]">
      <TitleBar />
      <TabRow />
      <Ribbon />
      <FormulaBar />
      <div className="flex items-stretch bg-[#e6e6e6]">
        <div className="flex min-w-0 flex-1 flex-col">
          <Sheet />
          <SheetTabs />
        </div>
        <FieldsPane />
      </div>
      <StatusBar />
      <Taskbar />
      <MiniToolbar />
      <ContextMenu />
      <svg className="absolute top-[314px] left-[449px]" width="8" height="12" viewBox="0 0 8 12" aria-hidden="true">
        <path d="M.5.5v9l2-1.800L4 11l1.500-.7L4 7.200h3z" fill="#fff" stroke="#333" strokeWidth=".8" />
      </svg>
      <svg className="absolute top-[383px] left-[456px]" width="4" height="14" viewBox="0 0 4 14" aria-hidden="true">
        <path d="M3 0L1 14" stroke="#777" />
      </svg>
    </div>
  );
}
